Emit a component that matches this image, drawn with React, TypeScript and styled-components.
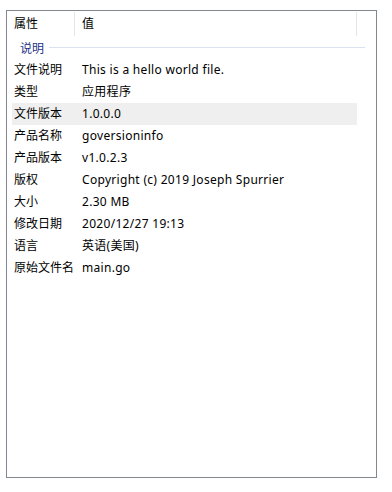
import React from "react";
import styled, { createGlobalStyle } from "styled-components";

const Global = createGlobalStyle`
  html, body { margin: 0; padding: 0; background: #ffffff; }
  body {
    font-family: "Noto Sans", "Noto Sans CJK SC", sans-serif;
    font-size: 12px;
    color: #000000;
  }
`;

const Page = styled.div`
  width: 392px;
  height: 492px;
  padding: 10px 0 0 6px;
  box-sizing: border-box;
`;

const ListBox = styled.div`
  width: 371px;
  height: 468px;
  border: 1px solid #828790;
  box-sizing: border-box;
  background: #ffffff;
  display: flex;
  flex-direction: column;
  padding: 1px 0 0 5px;
`;

const Header = styled.div`
  display: grid;
  grid-template-columns: 63px 282px;
  height: 24px;
`;

const HeaderCell = styled.div<{ $pad: number }>`
  display: flex;
  align-items: center;
  padding-left: ${(p) => p.$pad}px;
  border-right: 1px solid #e5e5e5;
  line-height: 1;
`;

const Group = styled.div`
  display: flex;
  align-items: center;
  height: 23px;
  padding-left: 8px;
  margin-right: 11px;
  color: #1e3287;
  gap: 5px;
  &::after {
    content: "";
    flex: 1;
    height: 1px;
    background: #dbe2ef;
  }
`;

const Row = styled.div<{ $sel?: boolean }>`
  display: grid;
  grid-template-columns: 68px 1fr;
  height: 22px;
  align-items: center;
  width: 345px;
  background: ${(p) => (p.$sel ? "#efefef" : "transparent")};
  line-height: 1;
`;

const Label = styled.span`
  padding-left: 2px;
  white-space: nowrap;
`;

const Value = styled.span`
  padding-left: 2px;
  white-space: nowrap;
  letter-spacing: 0.3px;
`;

const rows: [string, string][] = [
  ["文件说明", "This is a hello world file."],
  ["类型", "应用程序"],
  ["文件版本", "1.0.0.0"],
  ["产品名称", "goversioninfo"],
  ["产品版本", "v1.0.2.3"],
  ["版权", "Copyright (c) 2019 Joseph Spurrier"],
  ["大小", "2.30 MB"],
  ["修改日期", "2020/12/27 19:13"],
  ["语言", "英语(美国)"],
  ["原始文件名", "main.go"],
];

export default function App() {
  return (
    <>
      <Global />
      <Page>
        <ListBox>
          <Header>
            <HeaderCell $pad={2}>属性</HeaderCell>
            <HeaderCell $pad={7}>值</HeaderCell>
          </Header>
          <Group>说明</Group>
          {rows.map(([k, v]) => (
            <Row key={k} $sel={k === "文件版本"}>
              <Label>{k}</Label>
              <Value>{v}</Value>
            </Row>
          ))}
        </ListBox>
      </Page>
    </>
  );
}
